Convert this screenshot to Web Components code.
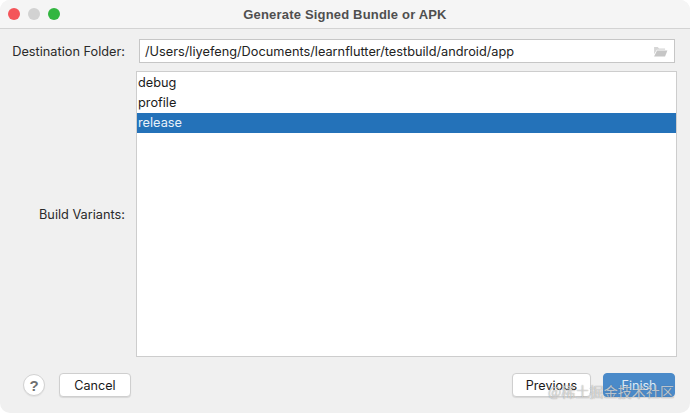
<!DOCTYPE html>
<html>
<head>
<meta charset="utf-8">
<title>Generate Signed Bundle or APK</title>
<style>
  html, body { margin: 0; padding: 0; background: #fff; }
  body { width: 690px; height: 413px; overflow: hidden; font-family: "Inter", "Liberation Sans", sans-serif; }
</style>
</head>
<body>
<template id="title-tpl">
  <style>
    :host { display: flex; align-items: center; height: 29px; box-sizing: border-box; padding-left: 8px; background: #f5f5f5; border-bottom: 1px solid #d3d3d3; position: relative; }
    .dots { display: flex; gap: 8px; }
    .dots i { display: block; width: 12px; height: 12px; border-radius: 50%; }
    .r { background: #f4555a; } .g { background: #d2d2d2; } .v { background: #32b640; }
    .title { flex: 1; text-align: center; font: 700 13px "Liberation Sans", sans-serif; color: #4f4f4f; padding-right: 60px; letter-spacing: .18px; }
  </style>
  <div class="dots"><i class="r"></i><i class="g"></i><i class="v"></i></div>
  <div class="title"><slot></slot></div>
</template>

<template id="field-tpl">
  <style>
    :host { display: flex; align-items: center; height: 24px; box-sizing: border-box; background: #fff; border: 1px solid #c6c6c6; padding: 0 5px 0 5px; font-size: 12.75px; color: #222; min-width: 0; }
    span { flex: 1; white-space: nowrap; }
    svg { display: block; flex: none; margin-right: 1px; }
  </style>
  <span><slot></slot></span>
  <svg width="15" height="11" viewBox="0 0 16 12"><path d="M1 1h4l1.400 1.600H13v1.600H4L1 9z" fill="#d6d6d6"/><path d="M4.200 5h11.300L13 11.500H1z" fill="#c6c6c6"/></svg>
</template>

<template id="list-tpl">
  <style>
    :host { display: block; flex: 1; background: #fff; border: 1px solid #cdcdcd; box-sizing: border-box; padding-top: 1px; height: 286px; }
  </style>
  <slot></slot>
</template>

<template id="item-tpl">
  <style>
    :host { display: block; height: 20px; line-height: 20px; padding-left: 1px; font-size: 12.75px; color: #1b1b1b; }
    :host([selected]) { background: #2472b9; color: #e8f1f9; }
  </style>
  <slot></slot>
</template>

<template id="btn-tpl">
  <style>
    :host { display: block; height: 24px; box-sizing: border-box; width: var(--w, 72px); border: 1px solid #cfcfcf; border-radius: 4px; background: #fff; font-size: 12.6px; color: #1a1a1a; text-align: center; line-height: 23px; box-shadow: 0 1px 1px rgba(0,0,0,.1); }
    :host([primary]) { background: #4a8ac9; border-color: #4a8ac9; color: #dfeaf5; }
  </style>
  <slot></slot>
</template>

<template id="help-tpl">
  <style>
    :host { display: flex; align-items: center; justify-content: center; width: 22px; height: 22px; box-sizing: border-box; border: 1px solid #d2d2d2; border-radius: 50%; background: #fff; font: 700 15px "Liberation Sans", sans-serif; color: #707070; box-shadow: 0 1px 1px rgba(0,0,0,.06); }
  </style>
  ?
</template>

<template id="dialog-tpl">
  <style>
    :host { display: flex; flex-direction: column; width: 690px; height: 413px; background: #f0f0f0; border-radius: 10px; overflow: hidden; position: relative; box-sizing: border-box; color: #2a2a2a; font-size: 12.75px; }
    .body { flex: 1; display: flex; flex-direction: column; padding: 10px 15px 0 0; }
    .row { display: flex; align-items: center; }
    .label { width: 125px; flex: none; text-align: right; }
    .dest { height: 24px; margin-bottom: 8px; }
    .dest .label { margin-right: 14px; }
    .variants { height: 286px; margin-right: -2px; }
    .variants .label { margin-right: 11px; }
    .foot { display: flex; align-items: center; padding: 16px 0 0 23px; }
    .gap { width: 14px; }
    .spacer { flex: 1; }
    .gap2 { width: 12px; }
    .mark { position: absolute; left: 548px; top: 381px; font: 14px "Noto Sans CJK SC", sans-serif; letter-spacing: .1px; color: rgba(255,255,255,.62); text-shadow: 0 0 1px rgba(90,90,90,.75); white-space: nowrap; }
  </style>
  <slot name="title"></slot>
  <div class="body">
    <div class="row dest"><div class="label">Destination Folder:</div><slot name="field"></slot></div>
    <div class="row variants"><div class="label">Build Variants:</div><slot name="list"></slot></div>
    <div class="foot"><slot name="help"></slot><div class="gap"></div><slot name="cancel"></slot><div class="spacer"></div><slot name="prev"></slot><div class="gap2"></div><slot name="finish"></slot></div>
  </div>
  <div class="mark">@稀土掘金技术社区</div>
</template>

<sign-dialog>
  <sign-title slot="title">Generate Signed Bundle or APK</sign-title>
  <sign-field slot="field" style="flex:1">/Users/liyefeng/Documents/learnflutter/testbuild/android/app</sign-field>
  <sign-list slot="list">
    <sign-item>debug</sign-item>
    <sign-item>profile</sign-item>
    <sign-item selected>release</sign-item>
  </sign-list>
  <sign-help slot="help"></sign-help>
  <sign-btn slot="cancel">Cancel</sign-btn>
  <sign-btn slot="prev" style="--w:79px">Previous</sign-btn>
  <sign-btn slot="finish" primary>Finish</sign-btn>
</sign-dialog>

<script>
  // every element is just a template stamped into an open shadow root
  function define(tag, tplId) {
    customElements.define(tag, class extends HTMLElement {
      constructor() {
        super();
        this.attachShadow({ mode: "open" });
        this.shadowRoot.appendChild(document.getElementById(tplId).content.cloneNode(true));
      }
    });
  }
  define("sign-dialog", "dialog-tpl");
  define("sign-title", "title-tpl");
  define("sign-field", "field-tpl");
  define("sign-list", "list-tpl");
  define("sign-item", "item-tpl");
  define("sign-btn", "btn-tpl");
  define("sign-help", "help-tpl");
</script>
</body>
</html>
